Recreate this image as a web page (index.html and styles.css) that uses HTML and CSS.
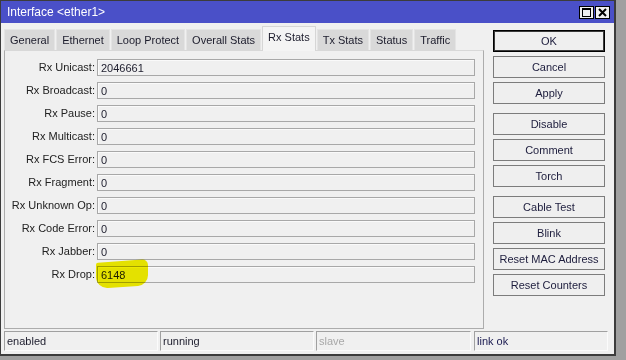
FILE: index.html
```html
<!DOCTYPE html>
<html lang="en">
<head>
<title>Interface &lt;ether1&gt;</title>
<link rel="stylesheet" href="styles.css">
</head>
<body>
<div class="window">
  <div class="titlebar">
    <span class="title">Interface &lt;ether1&gt;</span>
    <div class="title-buttons">
      <span class="tb-btn">
        <svg width="13" height="11" viewBox="0 0 13 11"><rect x="2.5" y="1.5" width="8" height="8" fill="none" stroke="#000"/><rect x="2" y="1" width="9" height="2" fill="#000"/></svg>
      </span>
      <span class="tb-btn">
        <svg width="13" height="11" viewBox="0 0 13 11"><path d="M3 2 L10 9 M10 2 L3 9" stroke="#000" stroke-width="2"/></svg>
      </span>
    </div>
  </div>

  <div class="main">
    <div class="left">
      <ul class="tabs">
        <li>General</li>
        <li>Ethernet</li>
        <li>Loop Protect</li>
        <li>Overall Stats</li>
        <li class="active">Rx Stats</li>
        <li>Tx Stats</li>
        <li>Status</li>
        <li>Traffic</li>
      </ul>
      <div class="panel">
        <div class="row"><label>Rx Unicast:</label><div class="field">2046661</div></div>
        <div class="row"><label>Rx Broadcast:</label><div class="field">0</div></div>
        <div class="row"><label>Rx Pause:</label><div class="field">0</div></div>
        <div class="row"><label>Rx Multicast:</label><div class="field">0</div></div>
        <div class="row"><label>Rx FCS Error:</label><div class="field">0</div></div>
        <div class="row"><label>Rx Fragment:</label><div class="field">0</div></div>
        <div class="row"><label>Rx Unknown Op:</label><div class="field">0</div></div>
        <div class="row"><label>Rx Code Error:</label><div class="field">0</div></div>
        <div class="row"><label>Rx Jabber:</label><div class="field">0</div></div>
        <div class="row"><label>Rx Drop:</label><div class="field">6148<span class="marker"></span></div></div>
      </div>
    </div>

    <div class="buttons">
      <div class="group">
        <button class="default">OK</button>
        <button>Cancel</button>
        <button>Apply</button>
      </div>
      <div class="group">
        <button>Disable</button>
        <button>Comment</button>
        <button>Torch</button>
      </div>
      <div class="group">
        <button>Cable Test</button>
        <button>Blink</button>
        <button>Reset MAC Address</button>
        <button>Reset Counters</button>
      </div>
    </div>
  </div>

  <div class="statusbar">
    <div class="cell">enabled</div>
    <div class="cell">running</div>
    <div class="cell muted">slave</div>
    <div class="cell last">link ok</div>
  </div>
</div>
</body>
</html>
```

FILE: styles.css
```css
body {
    margin: 0;
    background: #a0a0a0;
    font-family: "Liberation Sans", Arial, sans-serif;
    font-size: 11px;
    color: #1c1c2c;
}
.window {
    width: 616px;
    height: 356px;
    box-sizing: border-box;
    background: #f0f0f0;
    border: 1px solid #3c3c3c;
    border-right-width: 2px;
    border-bottom-width: 2px;
    display: flex;
    flex-direction: column;
}

/* title bar */
.titlebar {
    height: 22px;
    background: #4a50c8;
    color: #fff;
    display: flex;
    align-items: center;
    justify-content: space-between;
    padding: 0 4px 0 6px;
    font-size: 12px;
}
.title-buttons { display: flex; }
.tb-btn {
    width: 13px;
    height: 11px;
    border: 1px solid #000;
    background: #f0f0f0;
    margin-left: 1px;
    display: flex;
}

.main {
    display: flex;
    padding: 3px 0 0 3px;
}
.left { width: 480px; }

/* tabs */
.tabs {
    list-style: none;
    margin: 0;
    padding: 0;
    height: 24px;
    display: flex;
    align-items: flex-end;
}
.tabs li {
    height: 21px;
    line-height: 21px;
    box-sizing: border-box;
    padding: 0 5px;
    background: #d9d9d9;
    border: 1px solid #e4e4e4;
    border-bottom: none;
    margin-right: 1px;
    white-space: nowrap;
}
.tabs li.active {
    height: 25px;
    line-height: 21px;
    background: #f4f4f4;
    border-color: #d6d6d6;
    margin-bottom: -1px;
    position: relative;
}

/* stats panel */
.panel {
    height: 279px;
    box-sizing: border-box;
    border: 1px solid #acacac;
    border-top-color: #d8d8d8;
    padding-top: 8px;
}
.row {
    display: flex;
    height: 17px;
    margin-bottom: 6px;
}
.row label {
    width: 90px;
    padding-right: 2px;
    text-align: right;
    line-height: 17px;
    color: #222;
}
.field {
    flex: 1;
    margin-right: 8px;
    border: 1px solid #a8a8a8;
    box-shadow: inset 1px 1px 0 #fafafa;
    padding-left: 3px;
    line-height: 16px;
    position: relative;
}
.marker {
    position: absolute;
    left: -2px;
    top: -6px;
    width: 52px;
    height: 26px;
    background: #f3ef00;
    mix-blend-mode: multiply;
    border-radius: 2px 6px 10px 12px;
    transform: skewY(-4deg);
}

/* buttons */
.buttons {
    width: 112px;
    margin: 4px 0 0 9px;
}
.group { margin-bottom: 9px; }
.buttons button {
    display: block;
    width: 112px;
    height: 22px;
    margin-bottom: 4px;
    padding: 0;
    background: #efefef;
    border: 1px solid #7c7c7c;
    font-family: inherit;
    font-size: 11px;
    color: #1c1c3c;
}
.group button:last-child { margin-bottom: 0; }
.buttons button.default {
    border-color: #000;
    box-shadow: inset 0 0 0 1px #3a3a3a;
}

/* status bar */
.statusbar {
    display: flex;
    height: 20px;
    margin: 2px 0 0 3px;
}
.cell {
    width: 154px;
    box-sizing: border-box;
    margin-right: 2px;
    border: 1px solid;
    border-color: #a0a0a0 #fbfbfb #fbfbfb #a0a0a0;
    padding-left: 2px;
    line-height: 18px;
}
.cell.muted { color: #a8a8a8; width: 155px; margin-right: 3px; }
.cell.last { width: 134px; color: #1a1a50; }
```
